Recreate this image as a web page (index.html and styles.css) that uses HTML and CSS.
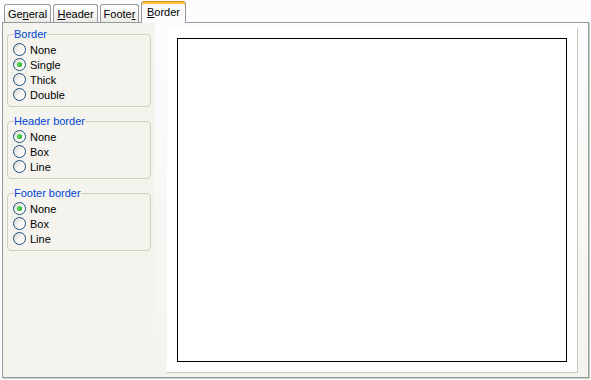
FILE: index.html
```html
<!DOCTYPE html>
<html lang="en">
	<head>
		<meta charset="utf-8">
		<title>Border</title>
		<link rel="stylesheet" href="styles.css">
	</head>
	<body>

<div class="window">
	<div class="tabstrip">
		<div class="tab tab-general">Ge<u>n</u>eral</div>
		<div class="tab tab-header"><u>H</u>eader</div>
		<div class="tab tab-footer">Foote<u>r</u></div>
		<div class="tab tab-border tab-active"><u>B</u>order</div>
	</div>

	<div class="page">
		<div class="options">
			<fieldset class="group">
				<legend>Border</legend>
				<div class="radio"><span class="dot"></span>None</div>
				<div class="radio checked"><span class="dot"></span>Single</div>
				<div class="radio"><span class="dot"></span>Thick</div>
				<div class="radio"><span class="dot"></span>Double</div>
			</fieldset>

			<fieldset class="group">
				<legend>Header border</legend>
				<div class="radio checked"><span class="dot"></span>None</div>
				<div class="radio"><span class="dot"></span>Box</div>
				<div class="radio"><span class="dot"></span>Line</div>
			</fieldset>

			<fieldset class="group">
				<legend>Footer border</legend>
				<div class="radio checked"><span class="dot"></span>None</div>
				<div class="radio"><span class="dot"></span>Box</div>
				<div class="radio"><span class="dot"></span>Line</div>
			</fieldset>
		</div>

		<div class="preview-area">
			<div class="preview">
				<div class="sheet"></div>
			</div>
		</div>
	</div>
</div>

	</body>
</html>
```

FILE: styles.css
```css
html, body {
	margin: 0;
	height: 100%;
}
* { box-sizing: border-box; }

body {
	overflow: hidden;
	background: #fcfcfe;
	color: black;
	font-family: "Liberation Sans", Arial, sans-serif;
	font-size: 11px;
}

.window {
	padding-left: 2px;
}

/* tabs */
.tabstrip {
	display: flex;
	align-items: flex-end;
	gap: 2px;
	height: 22px;
	padding-left: 2px;
}

.tab {
	height: 18px;
	padding-top: 1px;
	border: 1px solid #919b9c;
	border-bottom: none;
	border-radius: 3px 3px 0 0;
	background: linear-gradient(#ffffff, #ecebe5);
	text-align: center;
	line-height: 16px;
	white-space: nowrap;
}

.tab u { text-underline-offset: 1px; }

.tab-general { width: 47px; }
.tab-header { width: 45px; }
.tab-footer { width: 39px; }
.tab-border { width: 45px; }

.tab.tab-active {
	position: relative;
	z-index: 1;
	height: 22px;
	margin-bottom: -1px;
	padding-top: 2px;
	border-top-color: #e68b2c;
	background: #fcfcfe;
	box-shadow: inset 0 2px #ffc73c;
}

/* page */
.page {
	display: flex;
	width: 587px;
	height: 356px;
	border: 1px solid #919b9c;
	box-shadow: 1px 1px 0 #d0cebf;
	background: #f4f3ee;
}

.options {
	width: 152px;
	padding: 5px 4px 0 4px;
	background: #f4f3ee;
}

.group {
	margin: 0 0 8px;
	padding: 1px 0 4px 6px;
	min-width: 0;
	border: 1px solid #d0d0bf;
	border-radius: 4px;
}

.group legend {
	padding: 0;
	color: #0046d5;
	line-height: 13px;
}

.radio {
	display: flex;
	align-items: center;
	height: 15px;
	margin-left: -1px;
}

.dot {
	position: relative;
	width: 13px;
	height: 13px;
	margin-right: 4px;
	border: 1px solid #1c5180;
	border-radius: 50%;
	background: linear-gradient(135deg, #d6d2c6 0%, #f4f3ee 45%, #ffffff 90%);
}

.radio.checked .dot::after {
	content: "";
	position: absolute;
	left: 3px;
	top: 3px;
	width: 5px;
	height: 5px;
	border-radius: 50%;
	background: radial-gradient(circle at 40% 40%, #63e05f, #21a121 75%);
}

/* preview */
.preview-area {
	flex: 1;
	padding: 4px 10px 4px 11px;
	background: linear-gradient(#fcfcfe, #f4f3ee);
}

.preview {
	height: 100%;
	padding: 10px;
	border: 1px solid;
	border-color: #fcfcfe #c9c7ba #c9c7ba #f6f5f1;
	background: white;
}

.sheet {
	height: 100%;
	border: 1px solid black;
}
```
